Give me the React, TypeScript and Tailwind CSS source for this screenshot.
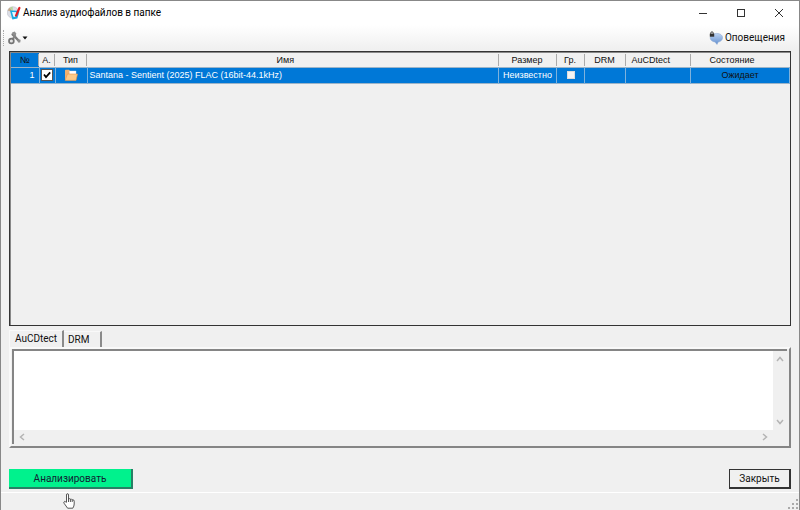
import React from 'react';

const files = [
  { id: 1, checked: true, name: 'Santana - Sentient (2025) FLAC (16bit-44.1kHz)', size: 'Неизвестно', group: false, state: 'Ожидает' },
];

const AppIcon = () => (
  <svg className="w-3.5 h-3.5 shrink-0" viewBox="0 0 14 14" aria-hidden="true">
    <circle cx="6" cy="6.5" r="5.8" fill="#dcdee6" stroke="#b4b7c2" strokeWidth="0.5" />
    <path d="M6 6.5 L0.8 4.4 A6 6 0 0 1 3 1.6 Z" fill="#c3a98a" />
    <path d="M6 6.5 L3 1.6 A6 6 0 0 1 5.6 0.7 Z" fill="#b7d69a" />
    <path d="M3 4.4 L12.4 4.8 L10.4 12.6 L5.4 13.6 Z" fill="#18a9e2" />
    <path d="M5 6 L9.6 6.2 L8.4 11 L6.4 10.8 Z" fill="#eaf8ff" />
    <path d="M12.4 2 L9 9.6" stroke="#e21c23" strokeWidth="2.2" strokeLinecap="round" />
  </svg>
);

const ToolsIcon = () => (
  <svg className="w-3.5 h-3.5" viewBox="0 0 14 14" aria-hidden="true">
    <path d="M4.6 3.4 L11 10" stroke="#7a7a7a" strokeWidth="2.4" strokeLinecap="round" />
    <path d="M4 1.6 L6.8 0.6 L8.2 2.4 L7.8 4.8 L5.4 4.4 Z" fill="#8f8f8f" />
    <path d="M7.6 4.4 L4.4 8.4" fill="none" stroke="#858585" strokeWidth="2.2" />
    <path d="M9.4 8.2 L12.6 8.8 L12.2 11.4 L10 11.4 Z" fill="#8f8f8f" />
    <circle cx="3.4" cy="10" r="2.4" fill="#e4e4e4" stroke="#747474" strokeWidth="1.7" />
  </svg>
);

const ChatIcon = () => (
  <svg className="w-3.5 h-3.5 shrink-0" viewBox="0 0 14 14" aria-hidden="true">
    <defs>
      <linearGradient id="bubble" x1="0" y1="0" x2="0" y2="1">
        <stop offset="0" stopColor="#bdd3f2" />
        <stop offset="1" stopColor="#6390d0" />
      </linearGradient>
    </defs>
    <path d="M7.8 2.4 C11.2 2.4 13.6 4.2 13.6 6.6 C13.6 9 11.6 10.8 9.2 11 L8 13.4 L6 11 C3 10.6 1.2 9 1.2 6.8 C1.2 4.2 4.4 2.4 7.8 2.4 Z" fill="url(#bubble)" stroke="#86a4d0" strokeWidth="0.5" />
    <path d="M1.8 3 V2 a1.2 1.2 0 0 1 2.4 0 V3" fill="none" stroke="#333" strokeWidth="0.9" />
    <rect x="0.8" y="2.7" width="4.4" height="3" fill="#333" />
  </svg>
);

const FolderIcon = () => (
  <svg className="w-3.5 h-3 mx-auto block" viewBox="0 0 14 12" aria-hidden="true">
    <path d="M1 1.5 Q1 0.8 1.8 0.8 H5 L6.4 2.2 H11 V11 H1 Z" fill="#eeb070" />
    <path d="M5.5 2 H12 V6 H5.5 Z" fill="#fff" stroke="#ddd" strokeWidth="0.4" />
    <path d="M1.2 11.4 L3.4 5 H13.5 L12 11.4 Z" fill="#fbc988" stroke="#e6964a" strokeWidth="0.6" />
  </svg>
);

const Chevron: React.FC<{ d: string }> = ({ d }) => (
  <svg className="w-2 h-2" viewBox="0 0 8 8" aria-hidden="true">
    <path d={d} fill="none" stroke="#b4b4b4" strokeWidth="1.5" />
  </svg>
);

const TitleBar = () => (
  <header className="flex items-center h-6 bg-white pl-1.5">
    <AppIcon />
    <h1 className="flex-1 ml-0.5 text-[10px] leading-4 text-black">Анализ аудиофайлов в папке</h1>
    <button aria-label="Свернуть" className="flex w-10 h-6 items-center justify-center">
      <svg className="w-2.5 h-2.5" viewBox="0 0 10 10"><path d="M1 5.5 H9" stroke="#333" /></svg>
    </button>
    <button aria-label="Развернуть" className="flex w-9 h-6 items-center justify-center">
      <svg className="w-2.5 h-2.5" viewBox="0 0 10 10"><rect x="1.5" y="1.5" width="7" height="7" fill="none" stroke="#333" /></svg>
    </button>
    <button aria-label="Закрыть окно" className="flex w-10 h-6 items-center justify-center">
      <svg className="w-2.5 h-2.5" viewBox="0 0 10 10"><path d="M1 1 L9 9 M9 1 L1 9" stroke="#333" /></svg>
    </button>
  </header>
);

const ToolBar = () => (
  <div className="flex items-center justify-between h-6 pt-0.5 pl-0.5 pr-3.5 bg-linear-to-b from-white to-[#f0f0f0]">
    <div className="flex items-center">
      <span className="h-4 border-l border-dotted border-[#aaa]" />
      <button aria-label="Инструменты" className="flex items-center ml-1">
        <ToolsIcon />
        <svg className="w-1.5 h-1" viewBox="0 0 6 4"><path d="M0.5 0.5 H5.5 L3 3.5 Z" fill="#111" /></svg>
      </button>
    </div>
    <button className="flex items-center gap-0.5 text-[10px] leading-4 text-[#111]">
      <ChatIcon />
      Оповещения
    </button>
  </div>
);

const Head: React.FC<{ children: React.ReactNode; className?: string; inner?: string }> = ({ children, className = '', inner = '' }) => (
  <th scope="col" className={`h-3.5 p-0 font-normal leading-3 ${className}`}>
    <div className={`h-3 border-r border-[#aaa] ${inner}`}>{children}</div>
  </th>
);

const FileTable = () => (
  <div className="h-[275px] border border-[#333] bg-[#f0f0f0] pl-px pt-px shadow-[inset_1px_1px_0_#888]">
    <table className="w-full table-fixed border-collapse font-['Liberation_Sans',Arial,sans-serif] text-[9px] text-[#111]">
      <thead>
        <tr>
          <Head className="w-7 bg-[#0078d7]">№</Head>
          <Head className="w-4">А.</Head>
          <Head className="w-8">Тип</Head>
          <Head inner="pr-3.5">Имя</Head>
          <Head className="w-[58px]">Размер</Head>
          <Head className="w-7">Гр.</Head>
          <Head className="w-[41px]">DRM</Head>
          <Head className="w-[65px] text-left" inner="pl-1.5">AuCDtect</Head>
          <th scope="col" className="w-[99px] h-3.5 p-0 pr-4 font-normal leading-3">Состояние</th>
        </tr>
      </thead>
      <tbody>
        {files.map((f) => (
          <tr key={f.id} className="h-4 bg-[#0078d7] text-white leading-3 border-y border-[#9cb4c8] [&>td]:border-r [&>td]:border-[#7fb2dc] [&>td]:p-0">
            <td><div className="pr-1 text-right">{f.id}</div></td>
            <td>
              <label className="relative block w-3 h-3 mx-auto">
                <input type="checkbox" aria-label="Анализировать файл" defaultChecked={f.checked} className="peer block appearance-none w-3 h-3 bg-white border border-[#555]" />
                <svg className="absolute inset-0 w-3 h-3 pointer-events-none opacity-0 peer-checked:opacity-100" viewBox="0 0 12 12">
                  <path d="M3 5.5 L5 8 L9.2 3.4" fill="none" stroke="#000" strokeWidth="1.8" />
                </svg>
              </label>
            </td>
            <td><FolderIcon /></td>
            <td><div className="pl-0.5 whitespace-nowrap">{f.name}</div></td>
            <td><div className="text-center whitespace-nowrap">{f.size}</div></td>
            <td>
              <input type="checkbox" aria-label="Группа" defaultChecked={f.group} className="block mx-auto appearance-none w-2 h-2 bg-[#f4f4f4] border border-[#ddd]" />
            </td>
            <td />
            <td />
            <td className="text-center text-[#111]">{f.state}</td>
          </tr>
        ))}
      </tbody>
    </table>
  </div>
);

const LogTabs = () => (
  <section className="mt-1">
    <div role="tablist" className="flex items-end h-[17px] text-[10px] leading-4 text-[#111]">
      <button role="tab" aria-selected="true" className="h-[17px] w-[55px] pb-0.5 border-l border-t border-[#f9f9f9] border-r-2 border-r-[#8a8a8a]">AuCDtect</button>
      <button role="tab" aria-selected="false" className="h-4 w-[38px] pl-1 text-left border-t border-t-[#f9f9f9] border-r-2 border-r-[#8a8a8a]">DRM</button>
    </div>
    <div className="h-[101px] border-2 border-[#858585] border-l-[#f9f9f9] border-t-[#f9f9f9] pl-px pr-0.5 pb-0.5">
      <div className="grid h-full grid-cols-[1fr_14px] grid-rows-[1fr_14px] border-l-2 border-t-2 border-[#858585] bg-[#f0f0f0]">
        <textarea aria-label="AuCDtect" readOnly className="block w-full h-full resize-none bg-white outline-none" />
        <div className="flex flex-col items-center justify-between py-1">
          <Chevron d="M1 6 L4 2.5 L7 6" />
          <Chevron d="M1 2 L4 5.5 L7 2" />
        </div>
        <div className="flex items-center justify-between px-1">
          <Chevron d="M6 1 L2.5 4 L6 7" />
          <Chevron d="M2 1 L5.5 4 L2 7" />
        </div>
      </div>
    </div>
  </section>
);

const HandCursor = () => (
  <svg className="absolute left-[54px] top-6 w-3 h-4 pointer-events-none" viewBox="0 0 12 16" aria-hidden="true">
    <path d="M3.5 9 V2 Q3.5 0.7 4.5 0.7 Q5.5 0.7 5.5 2 V6 Q6.5 5.2 7.4 6.2 Q8.6 5.6 9.2 6.8 Q11.2 6.4 11.2 8.2 V11 Q11.2 13 9.8 15.2 H4.6 L1 10.2 Q0.4 8.8 1.6 8.4 Q2.5 8.2 3.5 9.8 M5.5 6 V9 M7.4 6.2 V9 M9.2 6.8 V9" fill="#fff" stroke="#444" strokeWidth="0.9" strokeLinejoin="round" />
  </svg>
);

const ResizeGrip = () => (
  <svg className="w-2.5 h-2.5" viewBox="0 0 10 10" aria-hidden="true">
    <path d="M8 0h2v2h-2z M8 4h2v2h-2z M8 8h2v2h-2z M4 4h2v2h-2z M4 8h2v2h-2z M0 8h2v2h-2z" fill="#aaa" />
  </svg>
);

const App: React.FC = () => {
  return (
    <div className="flex flex-col min-h-screen border-x border-t border-[#888] bg-[#f0f0f0] font-['Roboto','Segoe_UI',sans-serif]">
      <TitleBar />
      <ToolBar />
      <main className="flex-1 px-2 pt-0.5">
        <FileTable />
        <LogTabs />
        <div className="flex items-start justify-between mt-[21px]">
          <div className="relative">
            <button className="block w-[124px] h-5 pt-0.5 bg-[#00f28d] border-r-2 border-b-2 border-[#287f65] text-[10px] leading-4 text-[#123]">Анализировать</button>
            <HandCursor />
          </div>
          <button className="block w-[62px] h-5 border border-[#333] border-r-2 border-b-2 text-[10px] leading-4 text-[#111]">Закрыть</button>
        </div>
      </main>
      <footer className="flex items-end justify-end h-[18px] pr-px pb-px border-t border-white">
        <ResizeGrip />
      </footer>
    </div>
  );
};

export default App;
